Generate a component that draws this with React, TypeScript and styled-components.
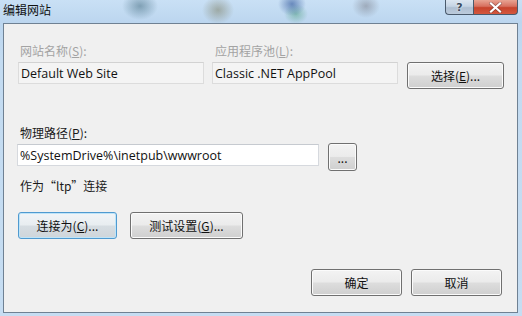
import styled, { createGlobalStyle, css } from "styled-components";

const GlobalStyle = createGlobalStyle`
  html, body {
    margin: 0;
    padding: 0;
    background: #c2dbf1;
  }
  body {
    font-family: "Noto Sans CJK SC", "Noto Sans", sans-serif;
    font-size: 12px;
  }
`;

const UI_FONT = `"Noto Sans CJK SC", "Noto Sans", sans-serif`;
const FIELD_FONT = `"Open Sans", "Noto Sans CJK SC", sans-serif`;

// Aero-style dialog frame for the IIS "edit site" window
export default function App() {
  return (
    <>
      <GlobalStyle />
      <Window>
        <TitleBar>
          <Title>编辑网站</Title>
          <CaptionButtons>
            <HelpButton>?</HelpButton>
            <CloseButton>
              <svg width="13" height="11" viewBox="0 0 13 11">
                <path
                  d="M2 1.5 L11 9.5 M11 1.5 L2 9.5"
                  stroke="#3a2020"
                  strokeWidth="3.4"
                  strokeLinecap="square"
                  opacity="0.45"
                />
                <path
                  d="M2 1.5 L11 9.5 M11 1.5 L2 9.5"
                  stroke="#ffffff"
                  strokeWidth="2.2"
                  strokeLinecap="square"
                />
              </svg>
            </CloseButton>
          </CaptionButtons>
        </TitleBar>
        <Client>
          <TopGrid>
            <Label disabled>
              网站名称(<u>S</u>):
            </Label>
            <Label disabled>
              应用程序池(<u>L</u>):
            </Label>
            <span />
            <TextBox readOnlyLook>Default Web Site</TextBox>
            <TextBox readOnlyLook>Classic .NET AppPool</TextBox>
            <Button width={97}>
              选择(<u>E</u>)...
            </Button>
          </TopGrid>

          <PathSection>
            <Label>
              物理路径(<u>P</u>):
            </Label>
            <PathRow>
              <TextBox width={302}>%SystemDrive%\inetpub\wwwroot</TextBox>
              <Button width={29} height={28}>
                ...
              </Button>
            </PathRow>
          </PathSection>

          <ConnectText>作为“ltp”连接</ConnectText>

          <ButtonRow>
            <Button width={99} focused>
              连接为(<u>C</u>)...
            </Button>
            <Button width={113}>
              测试设置(<u>G</u>)...
            </Button>
          </ButtonRow>

          <FooterRow>
            <Button width={91}>确定</Button>
            <Button width={91}>取消</Button>
          </FooterRow>
        </Client>
      </Window>
    </>
  );
}

const Window = styled.div`
  width: 522px;
  height: 316px;
  display: flex;
  flex-direction: column;
  box-sizing: border-box;
  font-family: ${UI_FONT};
  background:
    radial-gradient(ellipse 18px 14px at 140px 6px, rgba(70, 110, 130, 0.55), transparent),
    radial-gradient(ellipse 16px 14px at 218px 10px, rgba(120, 120, 90, 0.5), transparent),
    radial-gradient(ellipse 14px 12px at 292px 4px, rgba(40, 80, 150, 0.6), transparent),
    radial-gradient(ellipse 12px 10px at 296px 14px, rgba(60, 150, 110, 0.45), transparent),
    radial-gradient(ellipse 14px 12px at 366px 6px, rgba(110, 110, 120, 0.45), transparent),
    linear-gradient(180deg, #c9e0f5 0px, #bcd6ef 22px, #c3dbf1 60px, #c6ddf2 100%);
`;

const TitleBar = styled.div`
  height: 23px;
  display: flex;
  align-items: flex-start;
  padding: 0 4px 0 3px;
`;

const Title = styled.div`
  margin-top: 2px;
  font-size: 12px;
  line-height: 16px;
  color: #111;
`;

const CaptionButtons = styled.div`
  margin-left: auto;
  display: flex;
  height: 15px;
`;

const captionBase = css`
  height: 15px;
  box-sizing: border-box;
  display: flex;
  align-items: center;
  justify-content: center;
  border: 1px solid #4a5a6c;
  border-top: none;
`;

const HelpButton = styled.div`
  ${captionBase};
  width: 28px;
  border-right: none;
  border-bottom-left-radius: 4px;
  background: linear-gradient(180deg, #dbe6f1 0%, #c5d4e4 45%, #aebfd2 55%, #bccbdc 100%);
  color: #3a4c60;
  font-family: "DejaVu Sans", sans-serif;
  font-size: 11px;
  font-weight: bold;
  line-height: 1;
  text-shadow: 0 0 2px #fff;
`;

const CloseButton = styled.div`
  ${captionBase};
  width: 45px;
  border-bottom-right-radius: 4px;
  background: linear-gradient(180deg, #e8a493 0%, #d7705f 45%, #c7432c 55%, #d4583f 100%);
`;

const Client = styled.div`
  flex: 1;
  margin: 0 4px 3px 3px;
  border: 1px solid #6f8193;
  background: #f0f0f0;
  padding: 19px 14px 0 14px;
  display: flex;
  flex-direction: column;
`;

const Label = styled.div<{ disabled?: boolean }>`
  font-size: 12px;
  line-height: 16px;
  color: ${(p) => (p.disabled ? "#a3a3a3" : "#1a1a1a")};
  padding-left: 2px;
  u {
    text-underline-offset: 1px;
  }
`;

const TopGrid = styled.div`
  display: grid;
  grid-template-columns: 186px 186px 97px;
  column-gap: 8px;
  row-gap: 3px;
  align-items: start;
  & > ${Label}:nth-child(2) {
    margin-left: 1px;
  }
  & > button {
    margin-left: 1px;
  }
`;

const TextBox = styled.div<{ readOnlyLook?: boolean; width?: number }>`
  ${(p) => (p.width ? `width: ${p.width}px;` : "")}
  height: 22px;
  box-sizing: border-box;
  padding: 0 2px;
  display: flex;
  align-items: center;
  font-family: ${FIELD_FONT};
  font-size: 12.5px;
  color: #111;
  white-space: nowrap;
  border: 1px solid ${(p) => (p.readOnlyLook ? "#dcdcdc" : "#d6d9de")};
  border-top-color: ${(p) => (p.readOnlyLook ? "#d2d2d2" : "#c6cad0")};
  background: ${(p) => (p.readOnlyLook ? "#f4f4f4" : "#ffffff")};
`;

const Button = styled.button<{ width: number; height?: number; focused?: boolean }>`
  width: ${(p) => p.width}px;
  height: ${(p) => p.height ?? 27}px;
  box-sizing: border-box;
  padding: 0;
  margin: 0;
  font-family: ${UI_FONT};
  font-size: 12px;
  color: #111;
  border-radius: 3px;
  border: 1px solid ${(p) => (p.focused ? "#4f9ad0" : "#707070")};
  box-shadow: inset 0 0 0 1px ${(p) => (p.focused ? "#bfe4f8" : "#fbfbfb")};
  background: ${(p) =>
    p.focused
      ? "linear-gradient(180deg, #f1f5f8 0%, #e8edf0 48%, #d6dde2 52%, #cfd5da 100%)"
      : "linear-gradient(180deg, #f3f3f3 0%, #ebebeb 48%, #dddddd 52%, #cfcfcf 100%)"};
  display: flex;
  align-items: center;
  justify-content: center;
  u {
    text-underline-offset: 1px;
  }
`;

const PathSection = styled.div`
  margin-top: 36px;
  display: flex;
  flex-direction: column;
  gap: 3px;
`;

const PathRow = styled.div`
  display: flex;
  align-items: flex-start;
  gap: 9px;
  & > div {
    margin-left: -1px;
  }
  & > button {
    margin-top: -1px;
  }
`;

const ConnectText = styled.div`
  margin-top: 7px;
  padding-left: 2px;
  font-size: 12px;
  line-height: 16px;
  color: #1a1a1a;
`;

const ButtonRow = styled.div`
  margin-top: 18px;
  display: flex;
  gap: 13px;
`;

const FooterRow = styled.div`
  margin-top: 30px;
  display: flex;
  justify-content: flex-end;
  gap: 9px;
  padding-right: 1px;
`;
